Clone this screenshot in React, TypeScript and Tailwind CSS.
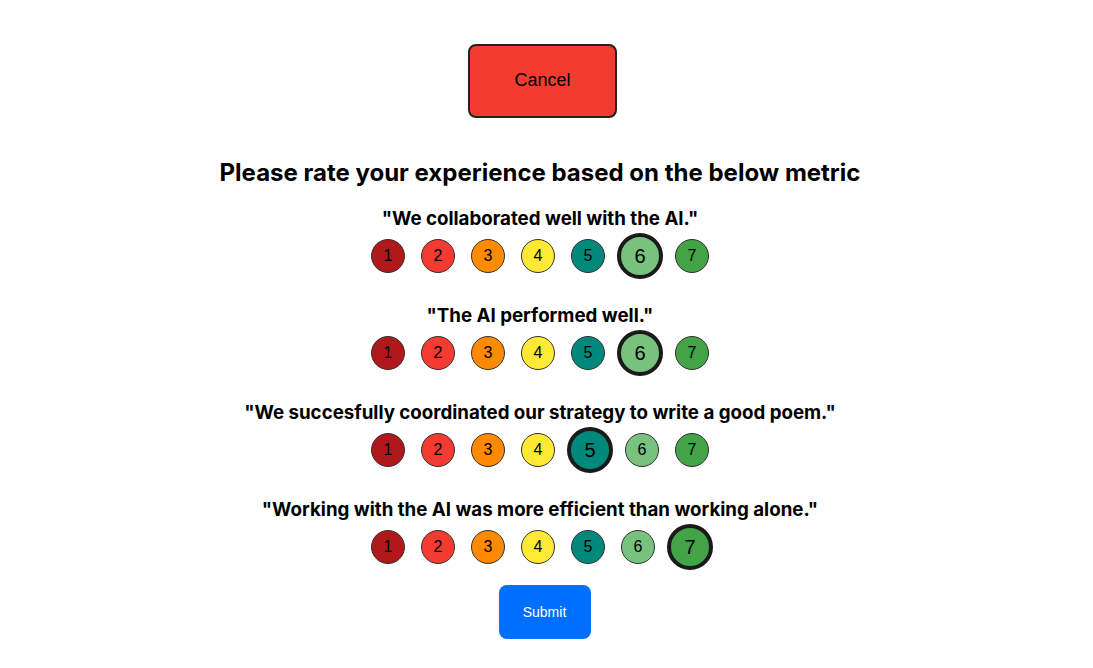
import { useState } from 'react';

const COLORS = ['bg-[#b0191c]', 'bg-[#f43b32]', 'bg-[#ff8a00]', 'bg-[#ffe935]', 'bg-[#00897b]', 'bg-[#79c27d]', 'bg-[#42a347]'];

const QUESTIONS = [
	{ text: '"We collaborated well with the AI."', value: 6 },
	{ text: '"The AI performed well."', value: 6 },
	{ text: '"We succesfully coordinated our strategy to write a good poem."', value: 5 },
	{ text: '"Working with the AI was more efficient than working alone."', value: 7 },
];

const RatingRow = ({ value, onChange }: { value: number; onChange: (v: number) => void }) => (
	<div className="flex items-center justify-center h-[46px] mt-[3px]">
		{COLORS.map((color, i) => {
			const n = i + 1;
			const selected = n === value;
			return (
				<button
					key={n}
					onClick={() => onChange(n)}
					className={`${color} rounded-full flex items-center justify-center text-black font-['Liberation_Sans',Arial,sans-serif] ${
						selected
							? 'w-[46px] h-[46px] mx-[4px] border-[4px] border-[#1a1a1a] text-[20px]'
							: 'w-[34px] h-[34px] mx-[8px] border border-[#333] text-[16px]'
					}`}
				>
					{n}
				</button>
			);
		})}
	</div>
);

export default function App() {
	const [values, setValues] = useState(QUESTIONS.map((q) => q.value));

	return (
		<div className="w-full min-h-[668px] bg-white flex flex-col items-center pr-[13px] font-['Inter',sans-serif]">
			<button className="mt-[44px] ml-[5px] w-[149px] h-[74px] pb-[2px] bg-[#f43b30] border-2 border-[#222] rounded-[8px] text-[18px] text-black font-['Liberation_Sans',Arial,sans-serif]">
				Cancel
			</button>
			<h1 className="mt-[39px] text-[24px] leading-[32px] font-bold text-black">
				Please rate your experience based on the below metric
			</h1>
			<div className="mt-[19px] flex flex-col items-center gap-[26px]">
				{QUESTIONS.map((q, i) => (
					<div key={i} className="flex flex-col items-center">
						<div className="text-[18.72px] leading-[22px] font-bold text-black">{q.text}</div>
						<RatingRow
							value={values[i]}
							onChange={(v) => setValues((prev) => prev.map((p, j) => (j === i ? v : p)))}
						/>
					</div>
				))}
			</div>
			<button className="mt-[15px] ml-[9px] w-[92px] h-[54px] bg-[#006fff] rounded-[8px] text-white text-[14px] font-['Liberation_Sans',Arial,sans-serif]">
				Submit
			</button>
		</div>
	);
}
